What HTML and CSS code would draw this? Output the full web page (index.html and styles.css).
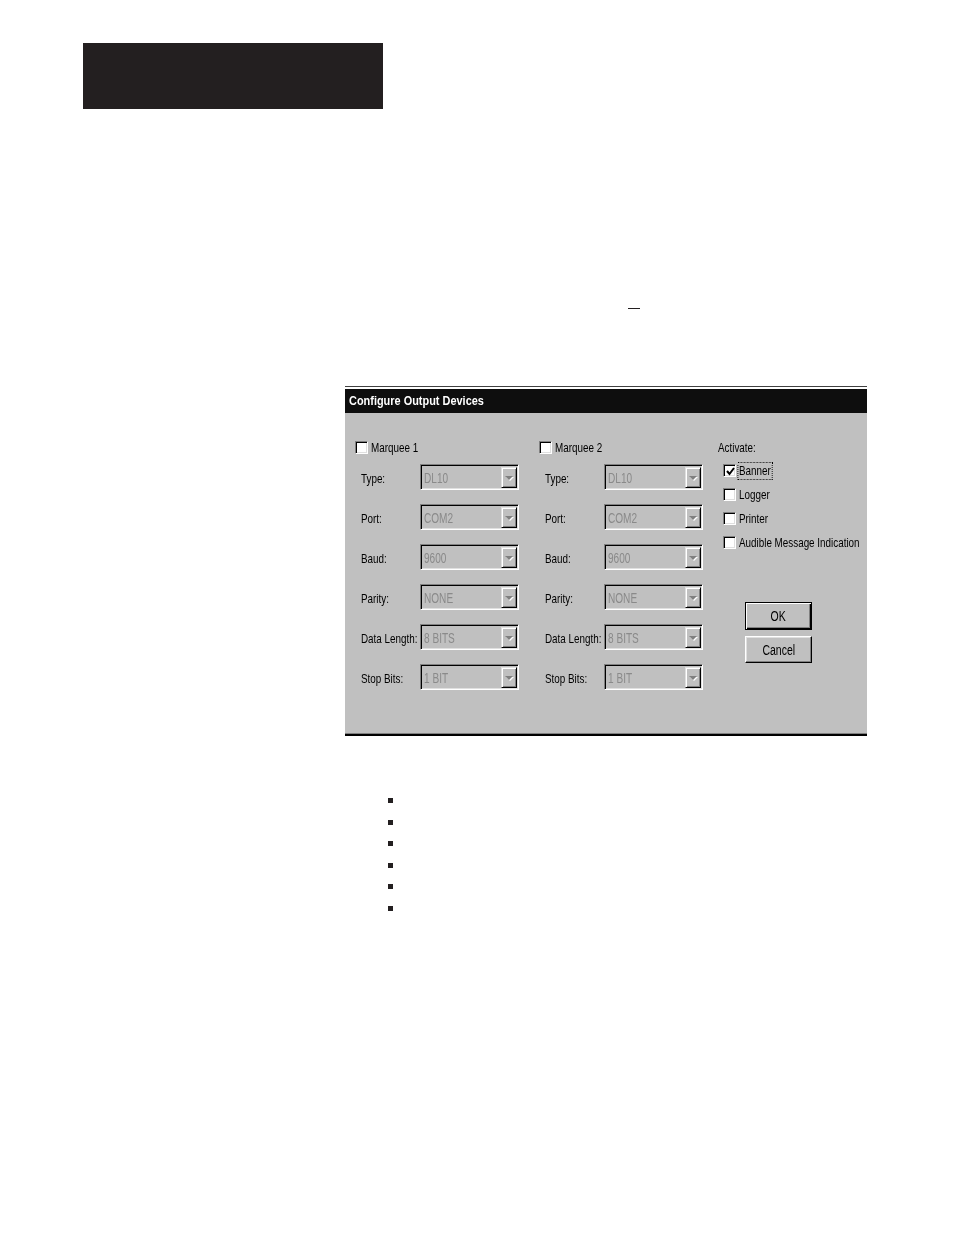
FILE: index.html
```html
<!DOCTYPE html>
<html>
<head>
<meta charset="utf-8">
<link rel="stylesheet" href="styles.css">
</head>
<body>
<div class="header-bar"></div>
<div class="dash"></div>

<div class="dialog">
  <div class="titlebar"><span class="nt">Configure Output Devices</span></div>
  <div class="dlg-body">
    <div class="col col1">
      <div class="check-row"><span class="cb"></span><span class="cb-label n">Marquee 1</span></div>
      <div class="field"><span class="flabel"><span class="n">Type:</span></span><div class="combo"><span class="ctext">DL10</span><span class="cbtn"><span class="arrow"></span></span></div></div>
      <div class="field"><span class="flabel"><span class="n">Port:</span></span><div class="combo"><span class="ctext">COM2</span><span class="cbtn"><span class="arrow"></span></span></div></div>
      <div class="field"><span class="flabel"><span class="n">Baud:</span></span><div class="combo"><span class="ctext">9600</span><span class="cbtn"><span class="arrow"></span></span></div></div>
      <div class="field"><span class="flabel"><span class="n">Parity:</span></span><div class="combo"><span class="ctext">NONE</span><span class="cbtn"><span class="arrow"></span></span></div></div>
      <div class="field"><span class="flabel"><span class="n">Data Length:</span></span><div class="combo"><span class="ctext">8 BITS</span><span class="cbtn"><span class="arrow"></span></span></div></div>
      <div class="field"><span class="flabel"><span class="n">Stop Bits:</span></span><div class="combo"><span class="ctext">1 BIT</span><span class="cbtn"><span class="arrow"></span></span></div></div>
    </div>
    <div class="col col2">
      <div class="check-row"><span class="cb"></span><span class="cb-label n">Marquee 2</span></div>
      <div class="field"><span class="flabel"><span class="n">Type:</span></span><div class="combo"><span class="ctext">DL10</span><span class="cbtn"><span class="arrow"></span></span></div></div>
      <div class="field"><span class="flabel"><span class="n">Port:</span></span><div class="combo"><span class="ctext">COM2</span><span class="cbtn"><span class="arrow"></span></span></div></div>
      <div class="field"><span class="flabel"><span class="n">Baud:</span></span><div class="combo"><span class="ctext">9600</span><span class="cbtn"><span class="arrow"></span></span></div></div>
      <div class="field"><span class="flabel"><span class="n">Parity:</span></span><div class="combo"><span class="ctext">NONE</span><span class="cbtn"><span class="arrow"></span></span></div></div>
      <div class="field"><span class="flabel"><span class="n">Data Length:</span></span><div class="combo"><span class="ctext">8 BITS</span><span class="cbtn"><span class="arrow"></span></span></div></div>
      <div class="field"><span class="flabel"><span class="n">Stop Bits:</span></span><div class="combo"><span class="ctext">1 BIT</span><span class="cbtn"><span class="arrow"></span></span></div></div>
    </div>
    <div class="col col3">
      <div class="activate"><span class="n">Activate:</span></div>
      <div class="checks">
        <div class="check-item"><span class="cb"><svg width="9" height="9" viewBox="0 0 9 9"><polyline points="1,4 3.5,7 8,1" fill="none" stroke="#000" stroke-width="2"/></svg></span><span class="cb-label n focus">Banner</span></div>
        <div class="check-item"><span class="cb"></span><span class="cb-label n">Logger</span></div>
        <div class="check-item"><span class="cb"></span><span class="cb-label n">Printer</span></div>
        <div class="check-item"><span class="cb"></span><span class="cb-label n">Audible Message Indication</span></div>
      </div>
      <div class="buttons">
        <div class="btn btn-default"><span class="nb">OK</span></div>
        <div class="btn"><span class="nb">Cancel</span></div>
      </div>
    </div>
  </div>
</div>

<ul class="bullets">
  <li></li><li></li><li></li><li></li><li></li><li></li>
</ul>
</body>
</html>
```

FILE: styles.css
```css
html, body {
  margin: 0;
  padding: 0;
  background: #fff;
}
body {
  font-family: "Liberation Sans", Arial, sans-serif;
  width: 954px;
  height: 1235px;
  overflow: hidden;
}
.header-bar {
  margin: 43px 0 0 83px;
  width: 300px;
  height: 66px;
  background: #231f20;
}
.dash {
  margin: 199px 0 0 628px;
  width: 12px;
  height: 1px;
  background: #231f20;
}
.dialog {
  margin: 77px 0 0 345px;
  width: 522px;
  border-top: 1px solid #404040;
  padding-top: 2px;
  background: #fff;
  border-bottom: 2px solid #000;
}
.titlebar {
  height: 24px;
  line-height: 23px;
  background: #0e0e0e;
  color: #fff;
  font-weight: bold;
  font-size: 13.5px;
  padding-left: 4px;
  white-space: nowrap;
}
.nt {
  display: inline-block;
  transform: scaleX(0.81);
  transform-origin: left center;
}
.n {
  display: inline-block;
  white-space: nowrap;
  transform: scaleX(0.73);
  transform-origin: left center;
}
.nb {
  display: inline-block;
  white-space: nowrap;
  transform: scaleX(0.75);
  transform-origin: center center;
}
.dlg-body {
  box-sizing: border-box;
  height: 321px;
  background: #c0c0c0;
  border-bottom: 1px solid #808080;
  padding: 28px 0 0 10px;
  display: flex;
  font-size: 13.5px;
  color: #000;
}
.col1 { width: 184px; }
.col2 { width: 179px; }
.col3 { width: 140px; }

.check-row {
  display: flex;
  align-items: center;
  height: 13px;
  margin-bottom: 10px;
}
.cb {
  box-sizing: border-box;
  width: 13px;
  height: 13px;
  background: #fff;
  border-top: 1px solid #808080;
  border-left: 1px solid #808080;
  border-right: 1px solid #fff;
  border-bottom: 1px solid #fff;
  box-shadow: inset 1px 1px 0 #000, inset -1px -1px 0 #dfdfdf;
  display: flex;
  align-items: center;
  justify-content: center;
  flex: none;
}
.cb svg { display: block; margin: 1px 0 0 1px; }
.cb-label {
  margin-left: 3px;
  line-height: 14px;
}
.field {
  display: flex;
  align-items: center;
  height: 26px;
  margin-bottom: 14px;
}
.flabel {
  width: 59px;
  padding-left: 6px;
  padding-top: 3px;
  white-space: nowrap;
}
.combo {
  box-sizing: border-box;
  width: 99px;
  height: 26px;
  border-top: 1px solid #808080;
  border-left: 1px solid #808080;
  border-right: 1px solid #fff;
  border-bottom: 1px solid #fff;
  box-shadow: inset 1px 1px 0 #000, inset -1px -1px 0 #dfdfdf;
  background: #c0c0c0;
  display: flex;
  align-items: center;
  justify-content: space-between;
  padding: 2px 1px 1px 3px;
}
.ctext {
  color: #8a8a8a;
  font-size: 14px;
  display: inline-block;
  white-space: nowrap;
  transform: scaleX(0.72);
  transform-origin: left center;
}
.cbtn {
  box-sizing: border-box;
  width: 16px;
  height: 21px;
  background: #c0c0c0;
  border-top: 1px solid #dfdfdf;
  border-left: 1px solid #dfdfdf;
  border-right: 1px solid #000;
  border-bottom: 1px solid #000;
  box-shadow: inset 1px 1px 0 #fff, inset -1px -1px 0 #808080;
  display: flex;
  align-items: center;
  justify-content: center;
}
.arrow {
  width: 0;
  height: 0;
  border-left: 4px solid transparent;
  border-right: 4px solid transparent;
  border-top: 4px solid #808080;
  filter: drop-shadow(1px 1px 0 #fff);
}
.col3 .activate {
  height: 14px;
  line-height: 14px;
  white-space: nowrap;
}
.checks {
  margin-top: 9px;
  padding-left: 5px;
}
.check-item {
  display: flex;
  height: 24px;
  align-items: flex-start;
}
.cb-label.focus {
  outline: 1px dotted #000;
  outline-offset: 1px;
}
.buttons {
  margin-top: 42px;
  padding-left: 27px;
  display: flex;
  flex-direction: column;
  gap: 6px;
}
.btn {
  box-sizing: border-box;
  width: 67px;
  height: 27px;
  background: #c0c0c0;
  border-top: 1px solid #fff;
  border-left: 1px solid #fff;
  border-right: 1px solid #000;
  border-bottom: 1px solid #000;
  box-shadow: inset -1px -1px 0 #808080, inset 1px 1px 0 #dfdfdf;
  display: flex;
  align-items: center;
  justify-content: center;
  font-size: 14px;
}
.btn-default {
  height: 28px;
  border: 1px solid #000;
  box-shadow: inset 1px 1px 0 #fff, inset -1px -1px 0 #000, inset -2px -2px 0 #808080;
}
.bullets {
  list-style: none;
  margin: 62px 0 0 388px;
  padding: 0;
}
.bullets li {
  height: 21.6px;
}
.bullets li::before {
  content: "";
  display: block;
  width: 5px;
  height: 5px;
  background: #231f20;
}
```
